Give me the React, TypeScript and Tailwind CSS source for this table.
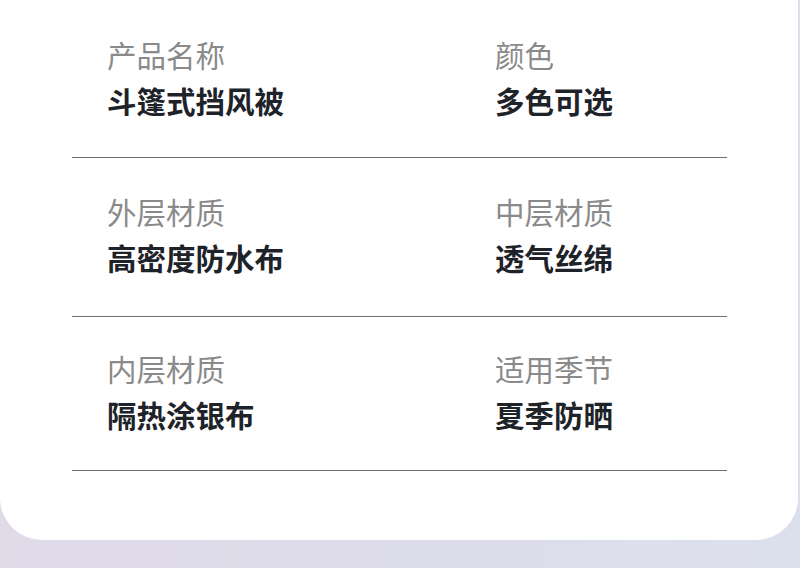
import React from 'react';

const SPECS: { label: string; value: string }[][] = [
  [
    { label: '产品名称', value: '斗篷式挡风被' },
    { label: '颜色', value: '多色可选' },
  ],
  [
    { label: '外层材质', value: '高密度防水布' },
    { label: '中层材质', value: '透气丝绵' },
  ],
  [
    { label: '内层材质', value: '隔热涂银布' },
    { label: '适用季节', value: '夏季防晒' },
  ],
];

// row paddings differ a pixel or two, as in the design
const ROW_PAD = ['pt-[34px] pb-[37px]', 'pt-[33px] pb-[39px]', 'pt-[31px] pb-[36px]'];

const App: React.FC = () => {
  return (
    <div
      className="w-[800px] h-[568px] overflow-hidden bg-gradient-to-r from-[#e0dae9] to-[#dce0ec]"
      style={{ fontFamily: '"Noto Sans CJK SC", "Noto Sans", sans-serif' }}
    >
      <div className="w-[798px] h-[540px] bg-white rounded-b-[42px]">
        <div className="ml-[72px] w-[655px]">
          {SPECS.map((row, i) => (
            <div
              key={i}
              className={`grid grid-cols-[423px_1fr] border-b border-[#6f6f6f] ${ROW_PAD[i]}`}
            >
              {row.map((item, j) => (
                <div key={item.label} className={`flex flex-col gap-[6px] ${j === 0 ? 'pl-[35px]' : ''}`}>
                  <div className="h-[40px] leading-[40px] text-[29.5px] text-[#8a8a8a]">{item.label}</div>
                  <div className="h-[40px] leading-[40px] text-[29.5px] font-bold text-[#1e2329]">{item.value}</div>
                </div>
              ))}
            </div>
          ))}
        </div>
      </div>
    </div>
  );
};

export default App;
